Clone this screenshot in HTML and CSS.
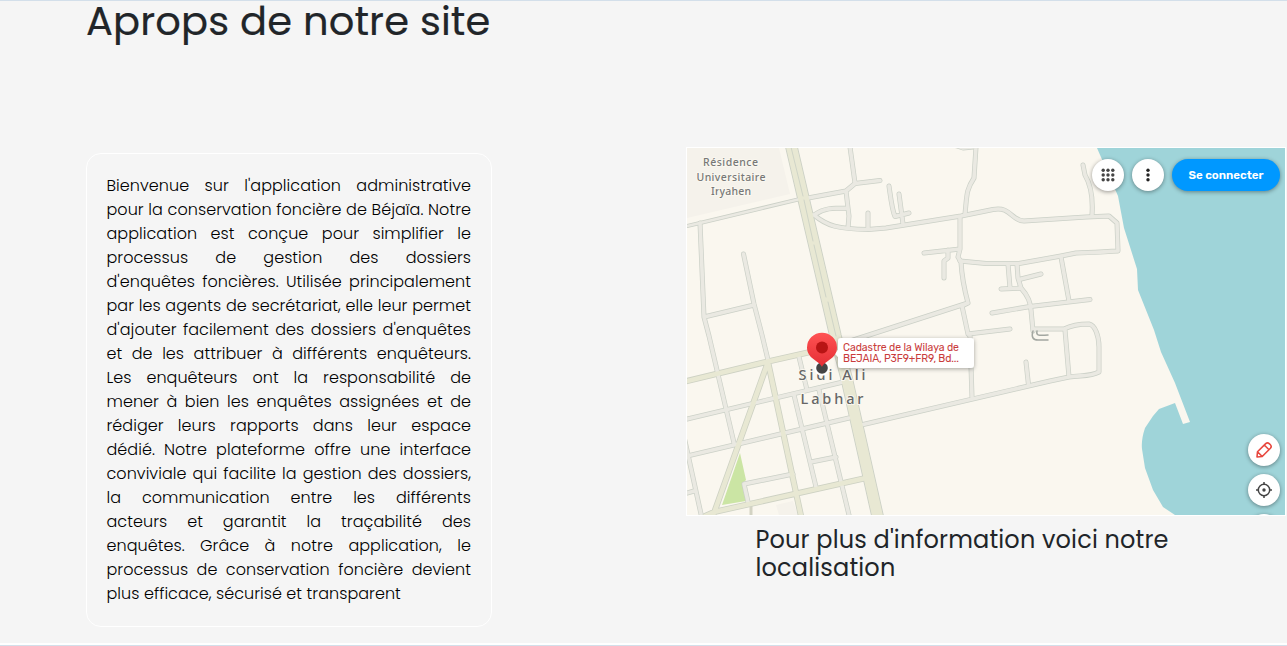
FILE: index.html
```html
<!DOCTYPE html>
<html lang="fr">
<head>
<meta charset="utf-8">
<title>Aprops de notre site</title>
<link rel="stylesheet" href="styles.css">
</head>
<body>
<main class="page">
  <h1 class="title">Aprops de notre site</h1>
  <div class="columns">
    <section class="about">
      <p class="line">Bienvenue sur l'application administrative</p>
      <p class="line">pour la conservation foncière de Béjaïa. Notre</p>
      <p class="line">application est conçue pour simplifier le</p>
      <p class="line">processus de gestion des dossiers</p>
      <p class="line">d'enquêtes foncières. Utilisée principalement</p>
      <p class="line">par les agents de secrétariat, elle leur permet</p>
      <p class="line">d'ajouter facilement des dossiers d'enquêtes</p>
      <p class="line">et de les attribuer à différents enquêteurs.</p>
      <p class="line">Les enquêteurs ont la responsabilité de</p>
      <p class="line">mener à bien les enquêtes assignées et de</p>
      <p class="line">rédiger leurs rapports dans leur espace</p>
      <p class="line">dédié. Notre plateforme offre une interface</p>
      <p class="line">conviviale qui facilite la gestion des dossiers,</p>
      <p class="line">la communication entre les différents</p>
      <p class="line">acteurs et garantit la traçabilité des</p>
      <p class="line">enquêtes. Grâce à notre application, le</p>
      <p class="line">processus de conservation foncière devient</p>
      <p class="line last">plus efficace, sécurisé et transparent</p>
    </section>
    <section class="place">
      <div class="map">
        <svg class="map-art" viewBox="687 148 598 367" width="598" height="367">
          <defs>
            <g id="streets">
              <path d="M808 198L846 191L855 183.500L880 180.500M850 147L855 183M846 191L848 208L849 216L848 228M814 215C824 208 832 208 848 208M810 215L814 215C827 226 838 229 868 229.500L886 228L961 216L993 209.500C1011 206 1011 221 1024 221L1086 217L1109 216L1117 223L1118 251C1100 252 1090 253 1076 253L1061 256L1019 263.500L986 263.500L960 261"/>
              <path d="M868 213V229M700 223L704 317L709 336L734 443M743.500 254L754 304L762 335L768 360M704 317L754 305M976 147L974 178C966 190 967 195 965 214M960 217V249L958 257L961 262C962 280 965 292 968 303L962 306L968 334L970 336L972 397M838 345L968 303M968 334L1010 329M924 253L960 249M948 250V258L944 261V278M889 186C891 200 892 210 895 216.500L909 213M899 194L903 224"/>
              <path d="M1008 264L1010 288M1001 289L1021 288M1017 264L1018 278L1021 288C1030 298 1030 304 1031 310L1033 331M1021 279L1041 274M1061 257L1069 301M992 313L1030 306.500L1090 299.500M1033 329H1064C1072 325 1080 324 1089 324C1095 325 1099 336 1099 347V372C1090 377 1080 375 1069 377L1050 381L861 425M1065 330L1069 377M1026 362L1028.500 385M1083 165L1085 175C1091 185 1093 200 1092 215M957 146L963 148L973 147"/>
              <path d="M687 419L843 382M687 456L849 418M683 432L701 514M687 493L694 491M799 357L807 390M794 395L816 487M819 390L849 515M811 462L836 457M793 474L744 484L748 502"/>
            </g>
            <g id="avenues">
              <path d="M687 381L768 361.500L808 352.500M768 362L714 513M768 362L801 516M705 516L714 512L866 478"/>
            </g>
            <linearGradient id="pin" x1="0" y1="0" x2="0" y2="1"><stop offset="0" stop-color="#ff5353"/><stop offset="1" stop-color="#e42d34"/></linearGradient>
            <filter id="shade" x="-20%" y="-50%" width="140%" height="220%"><feDropShadow dx="0" dy="1" stdDeviation="2" flood-opacity=".35"/></filter>
          </defs>
          <rect x="687" y="148" width="598" height="367" fill="#faf7ef"/>
          <path d="M687 148H779L790 194L687 218ZM776 505L793 501L798 515H779Z" fill="#f5f2eb"/>
          <path d="M740 453L746 480L743 483L746 501L722 505Z" fill="#cbe5a4"/>
          <path d="M1097 148L1104 164L1118 196L1124 228L1137 269L1138 290L1154 330L1161 352L1175 383L1190 422L1183 424L1175 403L1159 409L1153 416L1145 428Q1141 440 1142 449L1145 468L1153 490L1163 507L1175 515H1285V148Z" fill="#9fd4d9"/>
          <g fill="none" stroke-linejoin="round" stroke-linecap="round">
            <path d="M687 226L700 223L798 199.500" stroke="#cbd0c7" stroke-width="4"/>
            <path d="M751 504V518" stroke="#d3d3c3" stroke-width="3"/>
            <use href="#streets" stroke="#cbd0c7" stroke-width="5"/>
            <use href="#avenues" stroke="#cdd1c3" stroke-width="6.200"/>
            <path d="M791.500 147L835.500 336L847 380L878 518" stroke="#cbd0c5" stroke-width="12.500"/>
            <path d="M687 226L700 223L798 199.500" stroke="#eae9e2" stroke-width="2.400"/>
            <use href="#streets" stroke="#eae9e2" stroke-width="3.600"/>
            <use href="#avenues" stroke="#e8e8d3" stroke-width="4.600"/>
            <path d="M791.500 147L835.500 336L847 380L878 518" stroke="#e8e8d3" stroke-width="10.800"/>
            <path d="M791 147L803 196M804 200L813 241M814 245L826 297M828 302L836 336" stroke="#cfd4c7" stroke-width="1"/>
            <path d="M1033 331C1031 337 1033 340 1038 340H1048M1037 331C1036 335 1037 336 1048 335" stroke="#a3a7a1" stroke-width="1.500"/>
          </g>
          <g class="map-district">
            <text x="703" y="166" textLength="55">Résidence</text>
            <text x="696.500" y="180.500" textLength="69">Universitaire</text>
            <text x="711" y="195" textLength="40">Iryahen</text>
          </g>
          <g class="map-town">
            <text x="798.500" y="380" textLength="67">Sidi Ali</text>
            <text x="800.500" y="404" textLength="63">Labhar</text>
          </g>
          <path filter="url(#shade)" d="M841 338H971Q974 338 974 341V365Q974 368 971 368H841Q838 368 838 365V357L835 353.500L838 350V341Q838 338 841 338Z" fill="#fff"/>
          <g class="map-callout">
            <text x="843" y="351" textLength="116">Cadastre de la Wilaya de</text>
            <text x="843" y="361.800" textLength="116">BEJAIA, P3F9+FR9, Bd...</text>
          </g>
          <circle cx="822" cy="368" r="7.700" fill="#fff"/>
          <circle cx="822" cy="368" r="5.800" fill="#444"/>
          <path d="M822 367C820 361 807 359 807 347.500A15 14.700 0 0 1 837 347.500C837 359 824 361 822 367Z" fill="url(#pin)"/>
          <circle cx="822" cy="347.500" r="6" fill="#b81414"/>
        </svg>
        <div class="map-top">
          <button class="round"><svg width="16" height="16" viewBox="0 0 16 16" fill="#444"><circle cx="3.200" cy="3.200" r="1.700"/><circle cx="8" cy="3.200" r="1.700"/><circle cx="12.800" cy="3.200" r="1.700"/><circle cx="3.200" cy="8" r="1.700"/><circle cx="8" cy="8" r="1.700"/><circle cx="12.800" cy="8" r="1.700"/><circle cx="3.200" cy="12.800" r="1.700"/><circle cx="8" cy="12.800" r="1.700"/><circle cx="12.800" cy="12.800" r="1.700"/></svg></button>
          <button class="round"><svg width="16" height="16" viewBox="0 0 16 16" fill="#222"><circle cx="8" cy="3.200" r="1.700"/><circle cx="8" cy="8" r="1.700"/><circle cx="8" cy="12.800" r="1.700"/></svg></button>
          <button class="login">Se connecter</button>
        </div>
        <div class="map-side">
          <button class="round"><svg width="18" height="18" viewBox="0 0 18 18" fill="none" stroke="#e8483f" stroke-width="1.600" stroke-linejoin="round"><path d="M2 16L2.500 10.800L10.700 2.600Q12.500 1 14.200 2.600L15.400 3.800Q17 5.500 15.400 7.300L7.200 15.500ZM9.300 4L14 8.700M2.500 10.800L7.200 15.500"/></svg></button>
          <button class="round"><svg width="18" height="18" viewBox="0 0 18 18" fill="none" stroke="#444" stroke-width="1.500"><circle cx="9" cy="9" r="5.700"/><path d="M9 1V4M9 14V17M1 9H4M14 9H17"/><circle cx="9" cy="9" r="1.700" fill="#444" stroke="none"/></svg></button>
          <button class="round"></button>
        </div>
      </div>
      <h2 class="caption">Pour plus d'information voici notre localisation</h2>
    </section>
  </div>
</main>
</body>
</html>
```
FILE: styles.css
```css
* { box-sizing: border-box; }
body { margin: 0; background: #f5f5f5; font-family: Poppins, Inter, sans-serif; }
.page { height: 646px; border-top: 1px solid #d3dfea; border-bottom: 1px solid #d3dfea; box-shadow: inset 0 -2px #fff; padding-left: 86px; }
h1, h2, p { margin: 0; }
.title { height: 143px; font-size: 40px; line-height: 41px; font-weight: 400; letter-spacing: .13px; -webkit-text-stroke: .2px #212529; color: #212529; }
.columns { display: flex; gap: 194px; align-items: flex-start; padding-top: 3px; }
.about { width: 406px; height: 474px; margin-top: 6px; padding: 20px 20px 20px 19.5px; border: 1px solid #fff; border-radius: 15px; color: #000; font-size: 16px; line-height: 24px; font-weight: 300; }
.line { white-space: nowrap; text-align-last: justify; letter-spacing: .05px; }
.line.last { text-align-last: left; }
.place { width: 600px; }
.map { position: relative; height: 369px; border: 1px solid #fff; overflow: hidden; }
.map-art { display: block; }
.map-district { font: 500 10.500px "Noto Sans", sans-serif; fill: #777; stroke: #faf7ef; stroke-width: 2px; paint-order: stroke; }
.map-town { font: 500 14.500px "Noto Sans", sans-serif; fill: #666; stroke: #faf7ef; stroke-width: 2px; paint-order: stroke; }
.map-callout { font: 400 10.500px Rubik, Roboto, sans-serif; fill: #c93b3b; }
.map-top { position: absolute; top: 11px; right: 5px; display: flex; gap: 8px; }
.map-side { position: absolute; top: 286px; right: 5px; display: flex; flex-direction: column; gap: 8px; }
button { border: 0; padding: 0; height: 32px; box-shadow: 0 1px 4px rgba(0, 0, 0, .4); }
.round { width: 32px; border-radius: 50%; background: #fff; display: flex; align-items: center; justify-content: center; }
.login { width: 108px; border-radius: 16px; background: #0098ff; color: #fff; font: 600 11.500px Rubik, Inter, sans-serif; }
.caption { width: 520px; padding: 10px 0 0 69.5px; font-size: 24px; line-height: 28px; font-weight: 400; letter-spacing: .16px; color: #212529; }
```
